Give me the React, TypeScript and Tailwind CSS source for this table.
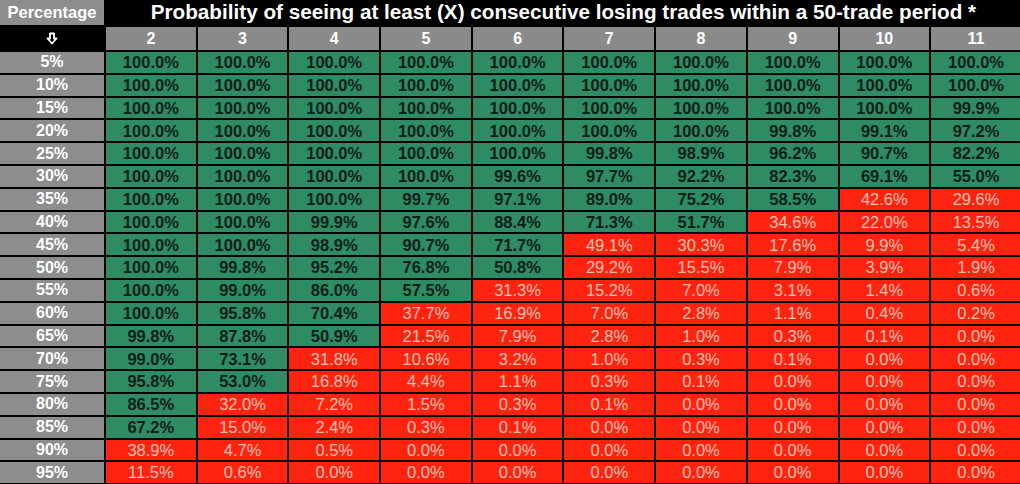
const cols = [2, 3, 4, 5, 6, 7, 8, 9, 10, 11]

const rows: [string, number[]][] = [
  ["5%", [100, 100, 100, 100, 100, 100, 100, 100, 100, 100]],
  ["10%", [100, 100, 100, 100, 100, 100, 100, 100, 100, 100]],
  ["15%", [100, 100, 100, 100, 100, 100, 100, 100, 100, 99.9]],
  ["20%", [100, 100, 100, 100, 100, 100, 100, 99.8, 99.1, 97.2]],
  ["25%", [100, 100, 100, 100, 100, 99.8, 98.9, 96.2, 90.7, 82.2]],
  ["30%", [100, 100, 100, 100, 99.6, 97.7, 92.2, 82.3, 69.1, 55.0]],
  ["35%", [100, 100, 100, 99.7, 97.1, 89.0, 75.2, 58.5, 42.6, 29.6]],
  ["40%", [100, 100, 99.9, 97.6, 88.4, 71.3, 51.7, 34.6, 22.0, 13.5]],
  ["45%", [100, 100, 98.9, 90.7, 71.7, 49.1, 30.3, 17.6, 9.9, 5.4]],
  ["50%", [100, 99.8, 95.2, 76.8, 50.8, 29.2, 15.5, 7.9, 3.9, 1.9]],
  ["55%", [100, 99.0, 86.0, 57.5, 31.3, 15.2, 7.0, 3.1, 1.4, 0.6]],
  ["60%", [100, 95.8, 70.4, 37.7, 16.9, 7.0, 2.8, 1.1, 0.4, 0.2]],
  ["65%", [99.8, 87.8, 50.9, 21.5, 7.9, 2.8, 1.0, 0.3, 0.1, 0.0]],
  ["70%", [99.0, 73.1, 31.8, 10.6, 3.2, 1.0, 0.3, 0.1, 0.0, 0.0]],
  ["75%", [95.8, 53.0, 16.8, 4.4, 1.1, 0.3, 0.1, 0.0, 0.0, 0.0]],
  ["80%", [86.5, 32.0, 7.2, 1.5, 0.3, 0.1, 0.0, 0.0, 0.0, 0.0]],
  ["85%", [67.2, 15.0, 2.4, 0.3, 0.1, 0.0, 0.0, 0.0, 0.0, 0.0]],
  ["90%", [38.9, 4.7, 0.5, 0.0, 0.0, 0.0, 0.0, 0.0, 0.0, 0.0]],
  ["95%", [11.5, 0.6, 0.0, 0.0, 0.0, 0.0, 0.0, 0.0, 0.0, 0.0]],
]

const DownArrow = () => (
  <svg width="12" height="13" viewBox="0 0 12 13">
    <path d="M4 1.5h4v5h2.5L6 11.5 1.5 6.5H4z" fill="none" stroke="#fff" strokeWidth="1.8" strokeLinejoin="round" />
  </svg>
)

const Cell = ({ v }: { v: number }) => {
  const good = v >= 50
  return (
    <div
      className={
        good
          ? "flex items-center justify-center bg-[#2e8b64] text-[16.5px] font-bold text-[#0d2017]"
          : "flex items-center justify-center bg-[#ff2410] text-[16.5px] text-[#f8c2b2]"
      }
    >
      {v.toFixed(1)}%
    </div>
  )
}

export default function App() {
  return (
    <div className="h-[484px] w-[1020px] overflow-hidden bg-black font-['Liberation_Sans',Arial,sans-serif]">
      <div className="grid grid-cols-[104px_repeat(10,89.7px)] grid-rows-[25px_23px_repeat(19,20.8px)] gap-[2px] leading-none">
        <div className="flex items-center justify-center bg-[#8d8d8d] text-[16.5px] font-bold text-white">
          Percentage
        </div>
        <div className="col-span-10 flex items-center justify-center bg-black text-[20.7px] font-bold text-white">
          Probability of seeing at least (X) consecutive losing trades within a 50-trade period *
        </div>

        <div className="flex items-center justify-center bg-black">
          <DownArrow />
        </div>
        {cols.map((c) => (
          <div key={c} className="flex items-center justify-center bg-[#8a8a8a] text-[16px] font-bold text-white">
            {c}
          </div>
        ))}

        {rows.map(([p, vals]) => (
          <>
            <div key={p} className="flex items-center justify-center bg-[#8d8d8d] text-[16px] font-bold text-white">
              {p}
            </div>
            {vals.map((v, i) => (
              <Cell key={p + i} v={v} />
            ))}
          </>
        ))}
      </div>
    </div>
  )
}
